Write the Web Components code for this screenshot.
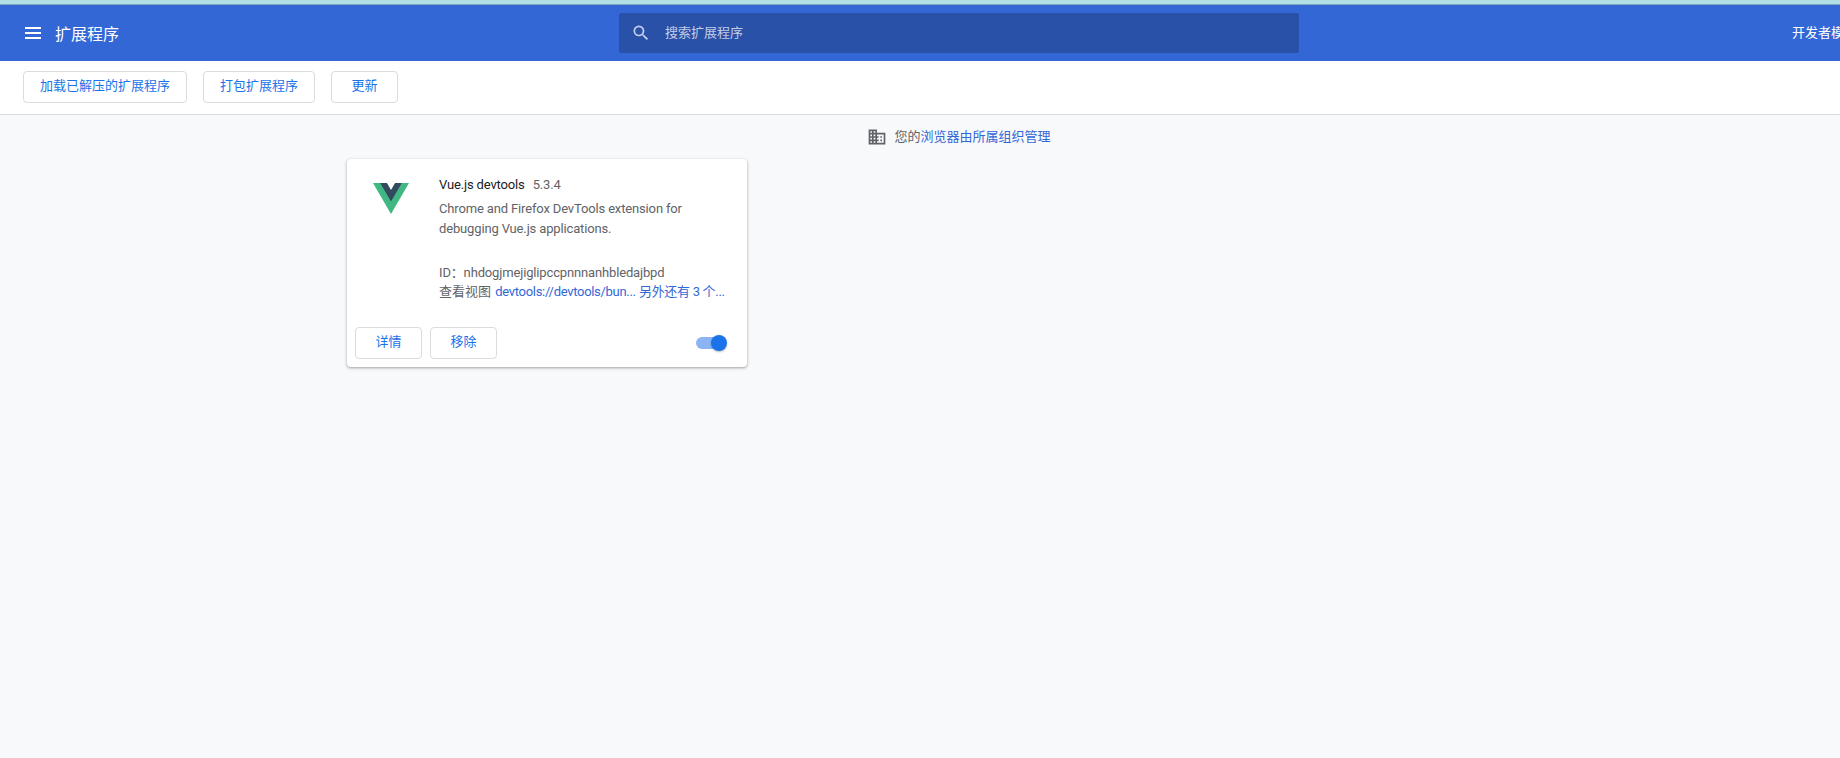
<!DOCTYPE html>
<html lang="zh">
<head>
<meta charset="utf-8">
<title>扩展程序</title>
<style>
  html, body { margin: 0; height: 100%; overflow: hidden; background: #f8f9fa; }
  body { font: 13px Roboto, "Noto Sans CJK SC", sans-serif; color: #5f6368; }
</style>
</head>
<body>
<ext-manager></ext-manager>

<script>
const FONT = 'Roboto, "Noto Sans CJK SC", sans-serif';

// Small base class: stamps the markup into an open shadow root.
class BaseElement extends HTMLElement {
  constructor(markup) {
    super();
    const template = document.createElement('template');
    template.innerHTML = markup;
    this.attachShadow({ mode: 'open' }).appendChild(template.content.cloneNode(true));
  }
}

class ExtToolbar extends BaseElement {
  constructor() {
    super(`
      <style>
        :host { display: grid; grid-template-columns: 1fr 680px 1fr; align-items: center; height: 56px;
          background: #3367d6; color: #fff; font: 13px ${FONT}; }
        .left { display: flex; align-items: center; padding-left: 25px; }
        .left svg { display: block; margin-right: 14px; }
        h1 { margin: 4px 0 0; font: 400 16px/24px ${FONT}; }
        .search { display: flex; align-items: center; height: 40px; margin: 0 1px 0 -1px; padding-left: 12px;
          background: #2a51a8; border-radius: 2px; color: rgba(255,255,255,.72); }
        .search svg { display: block; margin-right: 14px; }
        .search span { margin-bottom: 4px; }
        .right { display: flex; align-items: center; justify-content: flex-end; padding-right: 20px; }
        .right span { margin: 0 12px 4px 0; }
      </style>
      <div class="left">
        <svg width="16" height="12" viewBox="0 0 16 12" fill="#fff"><path d="M0 0h16v2H0zM0 5h16v2H0zM0 10h16v2H0z"/></svg>
        <h1>扩展程序</h1>
      </div>
      <div class="search">
        <svg width="20" height="20" viewBox="0 0 24 24" fill="#c4d0ea"><path d="M15.5 14h-.79l-.28-.27A6.47 6.47 0 0 0 16 9.5 6.5 6.5 0 1 0 9.5 16c1.61 0 3.09-.59 4.23-1.57l.27.28v.79l5 4.99L20.49 19l-4.99-5zm-6 0C7.01 14 5 11.99 5 9.5S7.01 5 9.5 5 14 7.01 14 9.5 11.99 14 9.5 14z"/></svg>
        <span>搜索扩展程序</span>
      </div>
      <div class="right">
        <span>开发者模式</span>
        <ext-toggle></ext-toggle>
      </div>`);
  }
}

class ExtButton extends BaseElement {
  constructor() {
    super(`
      <style>
        :host { display: inline-flex; align-items: center; justify-content: center; box-sizing: border-box;
          height: 32px; min-width: 67px; padding: 0 16px 6px; background: #fff; border: 1px solid #dadce0;
          border-radius: 4px; color: #1a73e8; font: 13px ${FONT}; white-space: nowrap; }
      </style>
      <slot></slot>`);
  }
}

class ExtToggle extends BaseElement {
  constructor() {
    super(`
      <style>
        :host { display: block; position: relative; width: 31px; height: 16px; }
        .bar { position: absolute; left: 0; top: 2px; width: 28px; height: 12px; border-radius: 6px; background: #8ab4f4; }
        .knob { position: absolute; left: 15px; top: 0; width: 16px; height: 16px; border-radius: 50%;
          background: #1a73e8; box-shadow: 0 1px 2px rgba(60,64,67,.35); }
      </style>
      <div class="bar"></div>
      <div class="knob"></div>`);
  }
}

class ExtActions extends BaseElement {
  constructor() {
    super(`
      <style>
        :host { display: flex; gap: 16px; height: 54px; box-sizing: border-box; align-items: flex-start;
          padding: 10px 0 0 23px; background: #fff; border-bottom: 1px solid #dadce0; }
      </style>
      <slot></slot>`);
  }
}

class ExtNotice extends BaseElement {
  constructor() {
    super(`
      <style>
        :host { display: flex; align-items: center; justify-content: center; height: 42px; padding-right: 2px;
          font: 13px ${FONT}; color: #5f6368; }
        svg { display: block; margin: 1px 7px 0 0; }
        span { margin-bottom: 2px; }
        a { color: #3367d6; text-decoration: none; }
      </style>
      <svg width="20" height="20" viewBox="0 0 24 24" fill="#5f6368"><path d="M12 7V3H2v18h20V7H12zM6 19H4v-2h2v2zm0-4H4v-2h2v2zm0-4H4V9h2v2zm0-4H4V5h2v2zm4 12H8v-2h2v2zm0-4H8v-2h2v2zm0-4H8V9h2v2zm0-4H8V5h2v2zm10 12h-8v-2h2v-2h-2v-2h2v-2h-2V9h8v10zm-2-8h-2v2h2v-2zm0 4h-2v2h2v-2z"/></svg>
      <span>您的<a href="#">浏览器由所属组织管理</a></span>`);
  }
}

class ExtCard extends BaseElement {
  constructor() {
    super(`
      <style>
        :host { display: flex; flex-direction: column; width: 400px; height: 208px; background: #fff;
          border-radius: 4px; box-shadow: 0 1px 2px rgba(60,64,67,.3), 0 1px 3px 1px rgba(60,64,67,.15);
          font: 13px/20px ${FONT}; color: #5f6368; }
        .main { flex: 1; display: flex; padding: 16px 18px 0 26px; min-height: 0; }
        .logo { display: block; flex: none; margin: 8px 30px 0 0; filter: blur(.4px); }
        .body { min-width: 0; flex: 1; }
        .latin { letter-spacing: -.15px; }
        .name { color: #202124; margin-right: 8px; }
        .desc { margin: 4px 0 24px; }
        .views { white-space: nowrap; margin-top: -1px; }
        a { color: #3367d6; text-decoration: none; }
        a.url { margin-left: 1px; letter-spacing: -.3px; }
        a.more { letter-spacing: -.3px; }
        .foot { display: flex; align-items: center; gap: 8px; padding: 0 20px 8px 8px; }
        .foot ext-toggle { margin-left: auto; }
      </style>
      <div class="main">
        <svg class="logo" width="36" height="31" viewBox="0 0 261.76 226.69" preserveAspectRatio="none">
          <path fill="#41b883" d="M161.096.001l-30.225 52.351L100.647.001H-.005l130.877 226.688L261.749.001z"/>
          <path fill="#34495e" d="M161.096.001l-30.225 52.351L100.647.001H52.346l78.526 136.01L209.398.001z"/>
        </svg>
        <div class="body">
          <div class="latin"><span class="name">Vue.js devtools</span><span>5.3.4</span></div>
          <div class="desc latin">Chrome and Firefox DevTools extension for debugging Vue.js applications.</div>
          <div class="latin">ID：nhdogjmejiglipccpnnnanhbledajbpd</div>
          <div class="views">查看视图 <a class="url" href="#">devtools://devtools/bun...</a> <a class="more" href="#">另外还有 3 个...</a></div>
        </div>
      </div>
      <div class="foot">
        <ext-button>详情</ext-button>
        <ext-button>移除</ext-button>
        <ext-toggle></ext-toggle>
      </div>`);
  }
}

class ExtList extends BaseElement {
  constructor() {
    super(`
      <style>
        :host { display: flex; padding: 2px 0 0 347px; }
      </style>
      <slot></slot>`);
  }
}

class ExtManager extends BaseElement {
  constructor() {
    super(`
      <style>
        :host { display: block; width: 1920px; }
        .strip { height: 5px; background: #b2dfe3; box-sizing: border-box; border-bottom: 1px solid #7fa6c0; }
      </style>
      <div class="strip"></div>
      <ext-toolbar></ext-toolbar>
      <ext-actions>
        <ext-button>加载已解压的扩展程序</ext-button>
        <ext-button>打包扩展程序</ext-button>
        <ext-button>更新</ext-button>
      </ext-actions>
      <ext-notice></ext-notice>
      <ext-list><ext-card></ext-card></ext-list>`);
  }
}

customElements.define('ext-toggle', ExtToggle);
customElements.define('ext-button', ExtButton);
customElements.define('ext-toolbar', ExtToolbar);
customElements.define('ext-actions', ExtActions);
customElements.define('ext-notice', ExtNotice);
customElements.define('ext-card', ExtCard);
customElements.define('ext-list', ExtList);
customElements.define('ext-manager', ExtManager);
</script>
</body>
</html>
